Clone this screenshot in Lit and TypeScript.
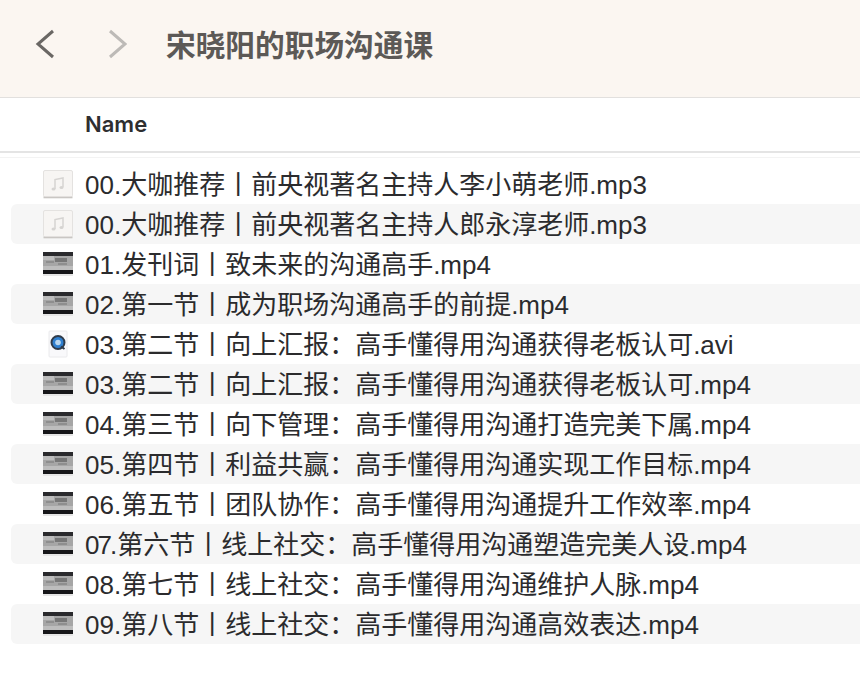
import { LitElement, html, css, svg } from "lit";
import { customElement } from "lit/decorators.js";

const files: [string, string, string][] = [
  ["audio", "00", ".大咖推荐丨前央视著名主持人李小萌老师.mp3"],
  ["audio", "00", ".大咖推荐丨前央视著名主持人郎永淳老师.mp3"],
  ["video", "01", ".发刊词丨致未来的沟通高手.mp4"],
  ["video", "02", ".第一节丨成为职场沟通高手的前提.mp4"],
  ["avi", "03", ".第二节丨向上汇报：高手懂得用沟通获得老板认可.avi"],
  ["video", "03", ".第二节丨向上汇报：高手懂得用沟通获得老板认可.mp4"],
  ["video", "04", ".第三节丨向下管理：高手懂得用沟通打造完美下属.mp4"],
  ["video", "05", ".第四节丨利益共赢：高手懂得用沟通实现工作目标.mp4"],
  ["video", "06", ".第五节丨团队协作：高手懂得用沟通提升工作效率.mp4"],
  ["video", "07", ".第六节丨线上社交：高手懂得用沟通塑造完美人设.mp4"],
  ["video", "08", ".第七节丨线上社交：高手懂得用沟通维护人脉.mp4"],
  ["video", "09", ".第八节丨线上社交：高手懂得用沟通高效表达.mp4"],
];

const audioIcon = svg`<svg width="32" height="30" viewBox="0 0 32 30">
  <rect x="1.5" y="1.5" width="29" height="26.5" rx="1.5" fill="#f7f5f3" stroke="#e4e2e0"/>
  <path d="M1.5 28.5h29" stroke="#c9c6c3" stroke-width="1.6"/>
  <path d="M13 20V10.5l8-1.5v9" fill="none" stroke="#d6d4d2" stroke-width="1.5"/>
  <ellipse cx="11.5" cy="20" rx="2" ry="1.6" fill="#d6d4d2"/>
  <ellipse cx="19.5" cy="18.5" rx="2" ry="1.6" fill="#d6d4d2"/>
</svg>`;

const videoIcon = svg`<svg width="32" height="26" viewBox="0 0 32 26">
  <rect x="1" y="1" width="30" height="4" fill="#2a2a2d"/>
  <rect x="1" y="5" width="30" height="14" fill="#a6a6a6"/>
  <path d="M1 5h11v4H1zM1 15h30v4H1z" fill="#bdbdbd"/>
  <path d="M13 7h12v4H13z" fill="#777"/>
  <path d="M4 11h8M16 13h9" stroke="#868686" stroke-width="1.5"/>
  <rect x="1" y="19" width="30" height="4" fill="#17171a"/>
  <rect x="1" y="23" width="30" height="2" fill="#e6e6e6"/>
</svg>`;

const aviIcon = svg`<svg width="32" height="32" viewBox="0 0 32 32">
  <rect x="7" y="3" width="18" height="26" rx="1" fill="#f9f9fb" stroke="#eaeaec"/>
  <circle cx="16" cy="14.5" r="6.5" fill="#2f7fcf" stroke="#2f3b4a" stroke-width="2"/>
  <circle cx="16" cy="14.5" r="2.8" fill="#b9d7f0"/>
  <path d="M19 18.5l3.5 2.5" stroke="#2f3b4a" stroke-width="2"/>
</svg>`;

@customElement("app-root")
export class AppRoot extends LitElement {
  static styles = css`
    :host { display: block; width: 860px; height: 684px; background: #fff; overflow: hidden;
      font-family: "Liberation Sans", "Noto Sans CJK SC", sans-serif; }
    .toolbar { height: 98px; box-sizing: border-box; background: #fbf6f1; border-bottom: 1px solid #e2e0de;
      display: flex; align-items: center; padding: 0 0 10px 35px; }
    .nav { display: flex; gap: 52px; margin-right: 39px; }
    .nav svg { display: block; }
    .title { font-size: 29.7px; font-weight: 700; color: #5c5956; }
    .header { height: 55px; box-sizing: border-box; border-bottom: 2px solid #e4e4e4;
      display: flex; align-items: center; padding: 0 0 1px 85px;
      font-size: 22px; font-weight: 600; color: #2e2e30; font-family: "Inter", "Liberation Sans", sans-serif; }
    .rule { height: 1px; background: #f3f3f3; margin-top: 4px; }
    .list { display: flex; flex-direction: column; padding: 6px 0 0 11px; }
    .row { height: 40px; display: flex; align-items: center; border-radius: 6px 0 0 6px; }
    .row:nth-child(even) { background: #f6f6f6; }
    .icon { width: 32px; height: 32px; margin: 0 11px 0 31px; display: flex; align-items: center; justify-content: center; flex: none; }
    .name { font-size: 26px; color: #2b2b2d; white-space: nowrap; transform: translateY(-2px); }
    .tight { letter-spacing: -2px; }
  `;

  private icon(kind: string) {
    if (kind === "audio") return audioIcon;
    if (kind === "avi") return aviIcon;
    return videoIcon;
  }

  render() {
    return html`
      <div class="toolbar">
        <div class="nav">
          <svg width="20" height="32" viewBox="0 0 20 32"><path d="M18 3L3 16l15 13" fill="none" stroke="#6a6764" stroke-width="3"/></svg>
          <svg width="20" height="32" viewBox="0 0 20 32"><path d="M3 3l15 13L3 29" fill="none" stroke="#bdbab7" stroke-width="3"/></svg>
        </div>
        <div class="title">宋晓阳的职场沟通课</div>
      </div>
      <div class="header">Name</div>
      <div class="rule"></div>
      <div class="list">
        ${files.map(([k, d, n]) => html`<div class="row"><div class="icon">${this.icon(k)}</div><div class="name"><span class=${d === "07" ? "tight" : ""}>${d}</span>${n}</div></div>`)}
      </div>
    `;
  }
}
